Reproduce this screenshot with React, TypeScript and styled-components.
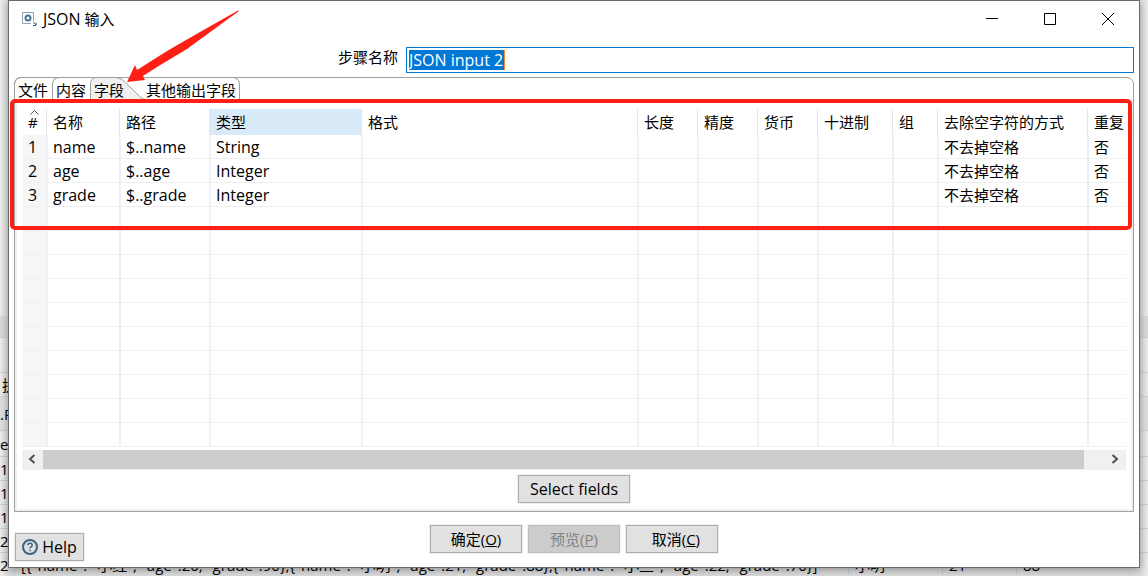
import React from "react";
import styled, { createGlobalStyle } from "styled-components";

const Global = createGlobalStyle`
  * { box-sizing: border-box; }
  body { margin: 0; background: #ececec; }
  body, button, input { font: 15px/20px "Open Sans", "Noto Sans CJK SC", sans-serif; color: #000; }
`;

const Desktop = styled.div`
  position: relative;
  min-height: 100vh;
  overflow: hidden;
  padding: 0 8px 8px;
  background: linear-gradient(90deg, #ececec, #dcdcdc 8px, #dcdcdc calc(100% - 8px), #ececec);
`;

const Backdrop = styled.div`
  position: absolute;
  inset: 316px 0 0;
  overflow: hidden;
`;

const BackRow = styled.div<{ $h: number; $bg?: string }>`
  display: flex;
  align-items: center;
  height: ${(p) => p.$h}px;
  border-bottom: 1px solid #cfcfcf;
  background: ${(p) => p.$bg || "transparent"};
  white-space: pre;
`;

const BackCell = styled.span<{ $w: number }>`
  flex: none;
  width: ${(p) => p.$w}px;
  padding-left: 6px;
  border-left: 1px solid #c4ccd8;
`;

const BackEdge = styled.span`
  display: flex;
  align-items: center;
  gap: 2px;
  flex: none;
  width: 14px;
`;

const Dialog = styled.main`
  position: relative;
  display: flex;
  flex-direction: column;
  background: #fff;
  border: 1px solid #6b6b6b;
  box-shadow: 0 2px 8px rgba(0, 0, 0, 0.35);
`;

const TitleBar = styled.header`
  display: flex;
  align-items: center;
  height: 36px;
  padding: 0 2px 0 12px;
`;

const Title = styled.h1`
  flex: 1;
  margin: 0 0 0 6px;
  font-size: 15px;
  font-weight: 400;
`;

const Latin = styled.span`
  font-size: 16px;
`;

const WindowButton = styled.button`
  display: grid;
  place-items: center;
  width: 58px;
  height: 36px;
  padding: 0;
  border: 0;
  background: none;
`;

const NameRow = styled.div`
  display: grid;
  grid-template-columns: 389px 1fr;
  align-items: center;
  column-gap: 8px;
  padding: 10px 5px 4px 0;
`;

const NameLabel = styled.label`
  text-align: right;
  padding-bottom: 6px;
`;

const NameBox = styled.div`
  display: flex;
  height: 26px;
  padding: 2px;
  border: 1px solid #0078d7;
`;

const NameInput = styled.input`
  width: 96px;
  height: 20px;
  padding: 0;
  border: 0;
  border-right: 1px solid #ff8728;
  outline: 0;
  background: #0078d7;
  color: #fff;
  font-size: 16px;
`;

const Folder = styled.section`
  position: relative;
  margin: 0 5px;
  border: 1px solid #a0a0a0;
  border-radius: 7px 7px 0 0;
`;

const Tabs = styled.div`
  display: flex;
  height: 22px;
  margin: -1px 0 0 -1px;
`;

const Tab = styled.button<{ $w: number; $last?: boolean; $selected?: boolean }>`
  position: relative;
  width: ${(p) => p.$w}px;
  height: 23px;
  padding: 1px 0 0 ${(p) => (p.$last ? 5 : 3)}px;
  text-align: left;
  white-space: nowrap;
  background: none;
  border: 0 solid #a0a0a0;
  border-width: ${(p) => (p.$selected ? "0" : p.$last ? "1px 1px 0 0" : "1px 0 0 1px")};
  border-radius: ${(p) => (p.$last ? "0 7px 0 0" : "7px 0 0 0")};
  ${(p) => p.$selected && "padding: 2px 0 0 4px;"}
`;

const TabShape = styled.svg`
  position: absolute;
  left: 0;
  top: 0;
`;

const TabText = styled.span`
  position: relative;
`;

const Panel = styled.div`
  padding: 10px 5px 6px;
  border: 2px solid #f0f0f0;
  border-top: 0;
`;

const TableArea = styled.div`
  overflow: hidden;
  padding-bottom: 3px;
`;

const Table = styled.table`
  width: 100%;
  table-layout: fixed;
  border-collapse: separate;
  border-spacing: 0;
`;

const Col = styled.col<{ $w?: number }>`
  width: ${(p) => (p.$w ? `${p.$w}px` : "auto")};
`;

const HeadCell = styled.th<{ $kind: string }>`
  position: relative;
  height: 26px;
  padding: 0 0 0 6px;
  text-align: left;
  font-weight: 400;
  white-space: nowrap;
  border-left: ${(p) => (p.$kind === "index" ? "0" : "1px solid #e5e5e5")};
  ${(p) => p.$kind === "active" && "background: #d9ebf9; border-left-color: #d9ebf9;"}
`;

const SortMark = styled.svg`
  position: absolute;
  left: 8px;
  top: 1px;
`;

const Cell = styled.td<{ $index?: boolean; $latin?: boolean }>`
  height: 24px;
  padding: 0 0 0 ${(p) => (p.$index ? 6 : 5)}px;
  font-size: ${(p) => (p.$latin ? 16 : 15)}px;
  white-space: nowrap;
  border-bottom: 1px solid #efefef;
  border-left: ${(p) => (p.$index ? "0" : "2px solid #edf1f7")};
  background: ${(p) => (p.$index ? "#f6f6f6" : "#fff")};
`;

const ScrollBar = styled.div`
  display: flex;
  height: 20px;
  background: #f0f0f0;
`;

const ScrollButton = styled.button`
  display: flex;
  align-items: center;
  justify-content: center;
  width: 21px;
  padding: 0 2px 2px 0;
  border: 0;
  background: none;
`;

const ScrollTrack = styled.div`
  flex: 1;
  padding-right: 21px;
`;

const ScrollThumb = styled.div`
  height: 19px;
  background: #cdcdcd;
`;

const Center = styled.div`
  display: flex;
  justify-content: center;
  padding-top: 5px;
`;

const PushButton = styled.button<{ $w: number }>`
  display: flex;
  align-items: center;
  justify-content: center;
  gap: 4px;
  width: ${(p) => p.$w}px;
  height: 28px;
  padding: 0;
  border: 1px solid #adadad;
  background: #e1e1e1;
  box-shadow: 0 0 0 1px #f0f0f0;
  white-space: nowrap;
  &:disabled {
    color: #838383;
    background: #cccccc;
    border-color: #bfbfbf;
  }
`;

const Footer = styled.footer`
  display: grid;
  grid-template-columns: 1fr auto 1fr;
  padding: 13px 6px 6px;
`;

const HelpSlot = styled.div`
  padding-top: 8px;
`;

const Actions = styled.div`
  display: flex;
  gap: 6px;
`;

const Highlight = styled.div`
  position: absolute;
  left: -5px;
  right: 1px;
  top: 21px;
  height: 131px;
  border: 4px solid #ff2015;
  border-radius: 5px;
  pointer-events: none;
`;

const Arrow = styled.svg`
  position: absolute;
  left: 111px;
  top: 4px;
  pointer-events: none;
`;

const columns: { name: string; w?: number }[] = [
  { name: "#", w: 24 },
  { name: "名称", w: 73 },
  { name: "路径", w: 90 },
  { name: "类型", w: 152 },
  { name: "格式", w: 276 },
  { name: "长度", w: 60 },
  { name: "精度", w: 60 },
  { name: "货币", w: 60 },
  { name: "十进制", w: 75 },
  { name: "组", w: 45 },
  { name: "去除空字符的方式", w: 150 },
  { name: "重复" },
];

const fields = [
  ["name", "$..name", "String"],
  ["age", "$..age", "Integer"],
  ["grade", "$..grade", "Integer"],
];

const rows = Array.from({ length: 13 }, (_, i) =>
  fields[i]
    ? [String(i + 1), ...fields[i], "", "", "", "", "", "", "不去掉空格", "否"]
    : columns.map(() => "")
);

const backRows = [
  { h: 22, bg: "#d9d9d9", text: "" },
  { h: 35, text: "" },
  { h: 24, text: "执", dot: true },
  { h: 34, bg: "#dedede", text: ".P" },
  { h: 26, text: "e" },
  { h: 24, text: "1" },
  { h: 24, text: "1" },
  { h: 24, text: "1" },
  { h: 24, text: "2" },
];

export default function App() {
  return (
    <>
      <Global />
      <Desktop>
        <Backdrop aria-hidden="true">
          {backRows.map((r, i) => (
            <BackRow key={i} $h={r.h} $bg={r.bg}>
              <BackEdge>
                {r.dot && (
                  <svg width="2" height="10"><ellipse cx="-1" cy="5" rx="3" ry="4" fill="#3d6480" /></svg>
                )}
                {r.text}
              </BackEdge>
            </BackRow>
          ))}
          <BackRow $h={24}>
            <BackEdge>2</BackEdge>
            <BackCell $w={834}>
              {'[{"name": "小红", "age":20, "grade":90},{"name": "小明", "age":21, "grade":88},{"name": "小兰", "age":22, "grade":70}]'}
            </BackCell>
            <BackCell $w={94}>小明</BackCell>
            <BackCell $w={74}>21</BackCell>
            <BackCell $w={132}>88</BackCell>
          </BackRow>
        </Backdrop>
        <Dialog>
          <TitleBar>
            <svg width="16" height="16" viewBox="0 0 16 16" fill="none">
              <path d="M12.500 10V1.500H1.500V12.500H10" stroke="#8ba6b8" />
              <circle cx="7" cy="7" r="2.500" stroke="#4a7591" strokeWidth="2" />
              <path d="M12 11l3 3M15 11.500V14.500H12" stroke="#2f6685" />
            </svg>
            <Title><Latin>JSON</Latin> 输入</Title>
            <WindowButton aria-label="Minimize">
              <svg width="12" height="12"><path d="M0 5.500H12" stroke="#000" /></svg>
            </WindowButton>
            <WindowButton aria-label="Maximize">
              <svg width="12" height="12"><path d="M.5.5H11.500V11.500H.5Z" fill="none" stroke="#000" /></svg>
            </WindowButton>
            <WindowButton aria-label="Close">
              <svg width="12" height="12"><path d="M0 0L12 12M12 0L0 12" stroke="#000" /></svg>
            </WindowButton>
          </TitleBar>
          <NameRow>
            <NameLabel htmlFor="step-name">步骤名称</NameLabel>
            <NameBox>
              <NameInput id="step-name" defaultValue="JSON input 2" />
            </NameBox>
          </NameRow>
          <Folder>
            <Tabs role="tablist">
              <Tab role="tab" $w={38}><TabText>文件</TabText></Tab>
              <Tab role="tab" $w={38}><TabText>内容</TabText></Tab>
              <Tab role="tab" aria-selected="true" $w={51} $selected>
                <TabShape width="60" height="23" fill="none">
                  <path d="M.5 23V7C.5 3 3 .5 7 .5H24C30 .5 34 3 38 8L47 17C50 20 52 22 56 22.500" fill="#f0f0f0" stroke="#a0a0a0" />
                </TabShape>
                <TabText>字段</TabText>
              </Tab>
              <Tab role="tab" $w={99} $last><TabText>其他输出字段</TabText></Tab>
            </Tabs>
            <Panel>
              <TableArea>
                <Table>
                  <colgroup>
                    {columns.map((c) => <Col key={c.name} $w={c.w} />)}
                  </colgroup>
                  <thead>
                    <tr>
                      {columns.map((c, i) => (
                        <HeadCell key={c.name} $kind={i === 0 ? "index" : i === 3 ? "active" : "plain"}>
                          {i === 0 && (
                            <SortMark width="9" height="5"><path d="M.5 4.500L4.500.5L8.500 4.500" fill="none" stroke="#555" /></SortMark>
                          )}
                          {c.name}
                        </HeadCell>
                      ))}
                    </tr>
                  </thead>
                  <tbody>
                    {rows.map((r, i) => (
                      <tr key={i}>
                        {r.map((v, j) => <Cell key={j} $index={j === 0} $latin={j < 4}>{v}</Cell>)}
                      </tr>
                    ))}
                  </tbody>
                </Table>
              </TableArea>
              <ScrollBar>
                <ScrollButton aria-label="Scroll left">
                  <svg width="8" height="10"><path d="M6.500 1L2 5L6.500 9" fill="none" stroke="#505050" strokeWidth="2" /></svg>
                </ScrollButton>
                <ScrollTrack><ScrollThumb /></ScrollTrack>
                <ScrollButton aria-label="Scroll right">
                  <svg width="8" height="10"><path d="M1.500 1L6 5L1.500 9" fill="none" stroke="#505050" strokeWidth="2" /></svg>
                </ScrollButton>
              </ScrollBar>
              <Center>
                <PushButton $w={112}><Latin>Select fields</Latin></PushButton>
              </Center>
            </Panel>
            <Highlight />
          </Folder>
          <Footer>
            <HelpSlot>
              <PushButton $w={69}>
                <svg width="16" height="16" fill="none" stroke="#3d6480">
                  <circle cx="8" cy="8" r="7" strokeWidth="2" />
                  <path d="M5.800 6.300C5.800 3.500 10.200 3.500 10.200 6.300C10.200 7.800 8 7.800 8 9.500M8 10.800V12.300" strokeWidth="1.500" />
                </svg>
                <Latin>Help</Latin>
              </PushButton>
            </HelpSlot>
            <Actions>
              <PushButton $w={92}><span>确定(<u>O</u>)</span></PushButton>
              <PushButton $w={92} disabled><span>预览(<u>P</u>)</span></PushButton>
              <PushButton $w={92}><span>&nbsp;&nbsp;取消(<u>C</u>)</span></PushButton>
            </Actions>
          </Footer>
          <Arrow width="124" height="82">
            <path d="M119 6L118 5.500L80 27L47 46L17 65L15 60L7 77L25 75L23 71L37 62L67 44Z" fill="#ff2015" />
          </Arrow>
        </Dialog>
      </Desktop>
    </>
  );
}
